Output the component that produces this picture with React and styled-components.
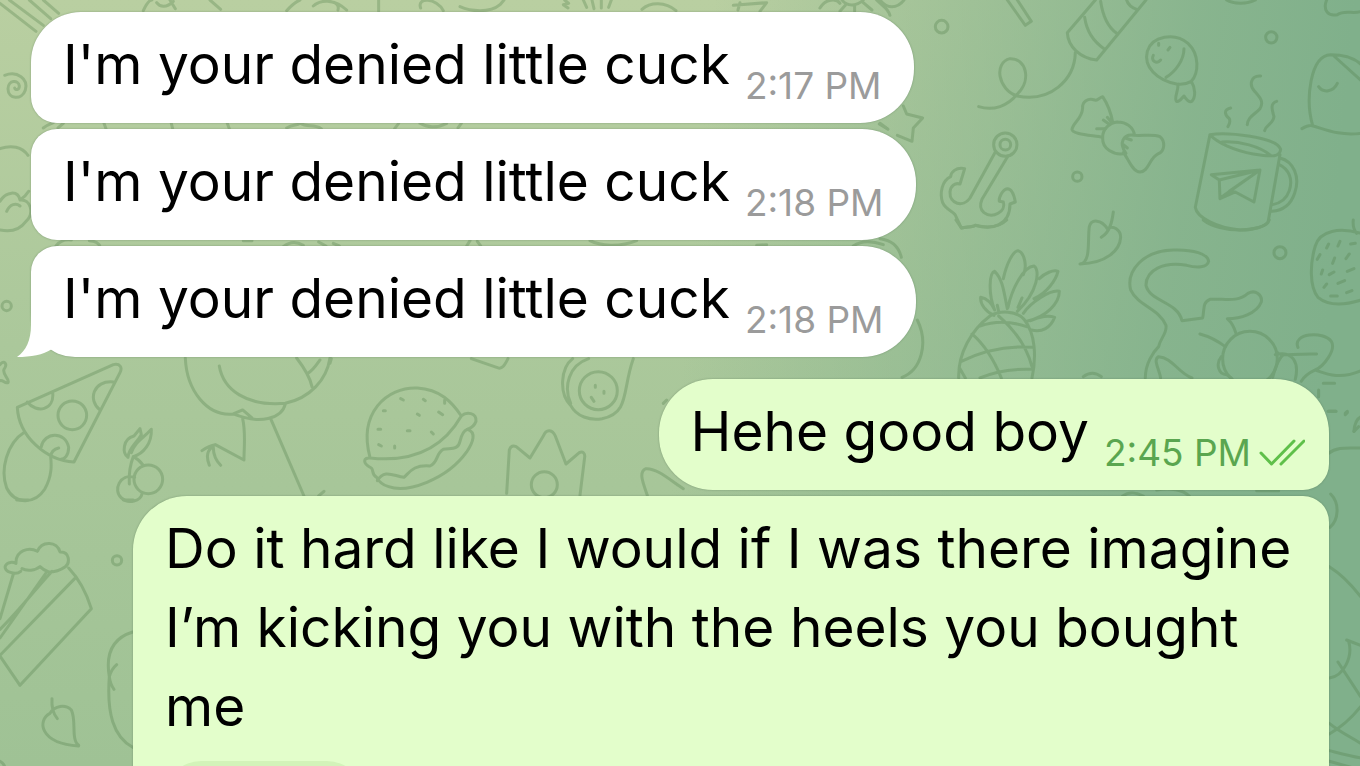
import React from "react";
import styled, { createGlobalStyle } from "styled-components";

const incoming = [
  { id: 1, text: "I'm your denied little cuck", time: "2:17 PM" },
  { id: 2, text: "I'm your denied little cuck", time: "2:18 PM" },
  { id: 3, text: "I'm your denied little cuck", time: "2:18 PM" },
];

function App() {
  return (
    <>
      <GlobalStyle />
      <Chat>
        <Wallpaper />
        <Group>
          {incoming.map((message, i) => (
            <Incoming
              key={message.id}
              $first={i === 0}
              $last={i === incoming.length - 1}
            >
              <Text>{message.text}</Text>
              <Time>{message.time}</Time>
              {i === incoming.length - 1 && <Tail />}
            </Incoming>
          ))}
        </Group>
        <Group>
          <Outgoing $first>
            <Text>Hehe good boy</Text>
            <Time $out>
              2:45 PM
              <Checks />
            </Time>
          </Outgoing>
          <Outgoing $long>
            <Text>
              Do it hard like I would if I was there imagine I’m kicking you
              with the heels you bought me
            </Text>
            <Reaction type="button" aria-label="Reactions" />
          </Outgoing>
        </Group>
      </Chat>
    </>
  );
}
export default App;

function Checks() {
  return (
    <ChecksIcon viewBox="0 0 46 28" aria-label="Read">
      <path d="M2 14 L12.500 25 L35 2" />
      <path d="M22 25 L45 2" />
    </ChecksIcon>
  );
}

function Tail() {
  return (
    <TailShape viewBox="0 0 36 44" aria-hidden="true">
      <path d="M14 0 V12 C14 27 9 38 0 44 C14 44 26 42 35 36 V0 Z" />
    </TailShape>
  );
}

function Wallpaper() {
  return (
    <Pattern
      viewBox="0 0 1360 766"
      preserveAspectRatio="xMidYMid slice"
      aria-hidden="true"
    >
      {/* top left: rays, shells, clouds */}
      <g transform="scale(.3333)">
        <path d="M0 10 L108 94 M28 0 L130 76 M88 0 L152 56 M130 0 L176 40" />
        <path d="M14 226 C52 212 86 236 76 270 C66 302 24 298 24 266 C24 240 56 238 58 258 C58 270 46 272 44 264" />
        <path d="M0 446 C34 434 66 440 84 466 M0 604 C18 574 54 570 60 600 C92 596 104 640 78 664 C56 694 28 696 0 690 M20 634 C30 612 48 608 60 618 M60 600 C70 594 80 584 86 574" />
        <path d="M430 32 C440 10 448 0 456 0 M470 8 C480 22 500 24 520 4 M510 0 L526 26 M630 0 L662 28 M860 32 C880 10 890 4 900 0 M940 18 C960 0 1000 -6 1040 30 M990 4 C1010 8 1018 16 1014 30 M1136 0 V34 M1262 24 C1250 -10 1310 -6 1330 32" />
        <path d="M130 384 C140 376 150 372 160 368 M174 384 L190 370 M312 370 L318 386 M514 370 L518 386 M682 370 L688 386 M860 384 C880 372 890 378 900 370 C924 384 940 370 964 386 M1184 386 L1196 370 M1260 370 C1280 382 1310 386 1340 370" />
        <path d="M168 738 C180 722 200 718 214 720 M268 722 C290 724 298 732 300 740 M730 722 L756 722 M850 740 C870 724 890 724 910 736 M956 726 L978 738 M1000 730 L1018 738" />
      </g>
      {/* top middle */}
      <g transform="translate(440 0) scale(.3333)">
        <path d="M60 20 C90 34 150 40 180 14 L192 0 M374 0 L386 10 L370 14 L384 24 M430 0 L440 22 M456 0 L462 26 M484 0 L484 24 M514 0 L506 22 M606 28 C630 6 676 4 708 32 M880 16 L980 8 L960 34 M900 8 L894 30 M1140 24 C1156 -4 1190 -6 1200 10 M1206 0 C1220 20 1250 20 1270 0 M1216 16 L1200 34 M1244 14 V34 M1270 8 L1296 30 M1310 0 C1330 20 1344 24 1350 46" />
        <path d="M54 384 L64 370 M1318 372 L1344 388 M80 738 L90 722 M112 724 L122 738 M450 722 C480 738 540 742 590 722 M950 736 L980 734 M1240 738 C1260 724 1290 720 1330 734" />
      </g>
      {/* firework, anchor, candy, fish, mug, ghost */}
      <g transform="translate(880 0) scale(.3333)">
        <path d="M0 0 C20 26 50 28 72 0 M382 0 L436 76 L454 64 L412 0" />
        <circle cx="185" cy="80" r="19" />
        <circle cx="1174" cy="112" r="17" />
        <circle cx="592" cy="530" r="14" />
        <path d="M646 0 L562 98 C564 140 600 174 650 180 L798 0 M614 52 C620 94 642 126 672 146 M662 4 C668 46 682 80 710 100 M740 0 C744 14 754 22 770 28" />
        <path d="M586 158 C584 240 510 308 412 288 C354 270 340 188 390 176 C438 174 456 240 412 282 C384 318 340 334 296 320" />
        <path d="M890 252 C830 240 790 200 802 154 C816 108 884 96 924 130 C960 164 956 220 934 244 C920 252 904 254 890 252 Z M912 146 C912 180 886 216 858 232 M894 252 C896 276 880 294 890 304 C898 308 906 292 912 288 C918 296 926 310 936 304 C948 290 946 264 934 244 M820 166 C812 182 830 194 842 180 M836 130 V136 M870 142 L864 150" />
        <path d="M698 366 C692 334 680 308 668 290 C656 294 650 304 644 300 C624 292 606 306 608 324 C606 358 580 366 576 388 C576 404 640 406 668 412 M650 386 L676 386 M670 360 L690 374 M682 352 L694 366" />
        <path d="M712 366 C740 366 760 382 764 406 M764 406 C728 400 716 430 738 460 C700 468 666 446 668 412 C668 386 690 368 712 366 M764 406 C790 408 820 402 840 410 C856 424 856 452 834 462 C808 474 806 516 780 516 C756 516 744 472 730 458 M736 414 L754 420 M730 434 L742 444" />
        <circle cx="376" cy="434" r="35" />
        <circle cx="376" cy="434" r="16" />
        <path d="M346 456 L270 594 C250 624 208 612 210 576 C212 556 226 548 240 552 L254 506 C228 500 212 518 212 530 C186 542 178 580 188 608 C200 634 226 634 228 650 L244 684 C262 680 278 682 286 676 C336 692 390 676 390 612 L406 606 C402 582 394 566 382 566 C368 568 356 592 358 604 L370 606 C380 634 338 658 312 638 C298 626 300 612 306 598 L384 468" />
        <path d="M70 318 L80 342 L128 354 L100 384 L96 424 L52 406 M0 370 L22 386" />
        <path d="M990 404 L946 622 C950 652 1010 684 1080 690 C1120 690 1154 680 1164 668 L1200 464 M990 404 C1040 396 1190 410 1202 448 C1200 470 1180 472 1120 462 C1064 452 1012 428 990 404 Z M1026 426 C1080 422 1140 440 1172 466 M1200 474 C1240 484 1262 530 1244 580 C1232 616 1206 632 1176 634 M1198 494 C1226 508 1240 536 1228 572 C1220 596 1200 610 1178 614" />
        <path d="M994 524 L1140 510 L1122 606 L1066 576 L1020 596 L1018 540 Z M1018 540 L1140 510 L1024 592 M1140 510 L1048 574 L1066 576" />
        <path d="M1142 228 C1110 226 1108 258 1124 274 C1142 294 1152 306 1140 326 C1124 344 1104 350 1102 374 M1190 304 C1168 310 1178 334 1182 350 C1180 372 1158 374 1154 392 M1052 324 C1028 330 1036 346 1048 356 C1052 366 1048 374 1044 380" />
        <path d="M1040 0 C1060 12 1100 14 1126 0 M1340 0 C1328 30 1344 50 1372 44 C1396 28 1420 44 1444 34 M1298 376 C1276 300 1290 166 1352 164 C1400 164 1430 180 1444 194 M1362 168 L1444 242 M1316 260 C1330 280 1360 276 1372 250 M1266 386 C1280 378 1290 374 1300 378 C1340 390 1380 408 1444 400" />
      </g>
      {/* pineapple, leaf, cat, strawberry */}
      <g transform="translate(880 220) scale(.3333)">
        <path d="M228 0 L244 24 C262 20 278 22 286 16 C330 26 360 20 380 0 M0 56 C34 60 56 78 64 112 M112 300 C146 370 124 450 66 472" />
        <path d="M600 132 C634 128 622 60 628 20 C634 -4 664 -2 682 26 C700 14 722 30 722 52 C720 90 680 130 600 132 Z M700 -24 C696 6 690 36 664 52" />
        <path d="M382 266 C372 220 370 180 344 154 C328 158 324 220 344 270 M370 176 C380 130 400 92 414 92 C434 98 442 140 430 164 M384 262 C396 206 430 140 462 138 C480 148 476 214 412 274 M478 176 C494 160 520 148 534 154 C528 180 500 220 462 236 M430 280 C450 250 510 208 538 214 C538 250 500 290 440 304 M452 302 C480 288 508 286 524 292 C512 324 486 338 454 330 M342 286 C318 276 300 252 302 232 C322 236 336 252 344 270 M414 262 L426 234 M356 274 L352 256" />
        <path d="M236 474 C234 400 274 330 330 288 C360 270 410 272 432 298 C466 340 470 410 456 474 M300 318 C350 300 400 306 440 320 M276 342 C320 380 346 430 364 474 M356 288 C400 326 440 380 456 440 M244 424 C310 392 380 376 460 382 M300 474 C350 452 410 446 460 448 M240 446 L256 474" />
        <path d="M796 474 C796 430 820 396 836 380 C842 352 862 340 858 316 C838 266 774 258 752 210 C738 152 790 92 880 90 C940 88 984 102 986 124 C982 144 950 144 920 136 C850 124 798 150 798 196 C810 246 892 244 906 302 L968 294 C974 270 966 248 990 238 C1030 234 1070 250 1104 220 C1126 208 1148 224 1144 246 C1130 282 1080 296 1042 296 C1060 312 1064 326 1068 340 M960 342 C990 350 1020 368 1036 380 M842 474 C838 446 818 420 836 410 C876 412 896 460 936 474" />
        <circle cx="1110" cy="416" r="82" />
        <path d="M1024 410 C1006 432 1016 464 1040 464 L1054 474 M1190 396 C1202 412 1230 400 1310 402 M1186 404 C1240 390 1258 430 1246 478 M1178 472 C1186 440 1196 414 1212 402 M1254 382 C1236 340 1330 332 1354 364 C1370 390 1330 440 1306 450 C1280 462 1270 474 1264 484 M1306 450 C1340 462 1380 480 1444 452 M1330 490 H1364 M1316 510 V530 M1346 574 H1368 M1396 580 L1402 574 M1422 634 C1424 610 1430 596 1444 590" />
        <circle cx="1200" cy="98" r="18" />
        <path d="M1444 40 C1380 22 1320 30 1306 78 C1290 130 1288 200 1314 232 C1350 262 1400 254 1444 240 M1420 0 C1418 18 1422 30 1430 40 M970 0 C1020 40 1150 40 1168 0" />
        <path d="M1346 72 L1340 84 M1380 64 L1374 78 M1412 72 L1426 70 M1320 104 L1312 118 M1364 114 L1358 130 M1408 102 L1398 116 M1328 150 L1324 162 M1348 164 L1362 156 M1402 154 L1422 146 M1340 192 L1332 202 M1374 190 L1394 182 M1352 228 H1372 M1400 218 L1416 212 M610 470 C626 458 646 456 664 470" />
      </g>
      {/* pizza, cherries, flamingo */}
      <g transform="translate(0 230) scale(.3333)">
        <circle cx="20" cy="228" r="14" />
        <path d="M0 404 C12 388 24 402 12 418 C6 434 30 446 24 458 C14 462 8 448 0 452" />
        <path d="M52 532 L340 404 C360 400 368 412 360 428 L222 696 C140 692 56 620 52 532 Z M82 516 C110 552 164 540 158 488 M340 456 C280 450 262 510 300 540 M124 650 C132 606 196 602 206 652 C206 676 194 688 182 688 M74 606 C20 640 0 720 20 774 C46 826 106 822 134 778 C158 736 154 700 152 680 C154 664 166 656 176 654" />
        <circle cx="217" cy="556" r="43" />
        <circle cx="445" cy="748" r="43" />
        <path d="M404 742 C360 730 338 780 364 804 C386 824 422 812 426 792 M388 762 C386 730 392 700 400 680 C412 686 424 698 430 706 M400 680 C430 672 456 640 454 598 L440 612 M384 682 C366 670 368 626 402 618 L420 596 L424 614 C410 640 386 652 384 682 M440 612 C420 630 404 640 394 668" />
        <path d="M556 384 C560 480 620 560 700 552 C780 584 846 566 856 522 M658 408 C670 480 740 530 856 520 C930 504 980 450 990 384 M890 384 C910 410 930 440 936 470 M924 430 C940 420 950 404 960 390 M700 552 L728 540 L756 564 M728 566 C738 610 732 650 732 690 L646 644 M606 662 C620 652 630 646 646 644 M638 650 C620 662 618 680 628 706 M640 652 C640 680 650 694 662 706 M812 566 L912 798 M956 798 L972 784" />
      </g>
      {/* burger, avocado, crown */}
      <g transform="translate(330 340) scale(.3333)">
        <path d="M120 352 C84 220 170 140 262 144 C330 148 366 186 394 228 C410 214 440 218 438 244 C430 264 420 264 412 268 C440 276 430 306 410 336 C350 420 230 460 176 440 C156 434 144 420 140 412 C124 404 132 392 124 384 C96 370 100 352 120 354 C230 366 330 340 394 228" />
        <path d="M142 422 C164 386 190 408 222 412 C240 396 250 374 300 378 C326 366 316 342 340 328 C366 324 384 330 390 304 C394 286 400 272 412 268" />
        <path d="M212 176 L220 180 M280 178 L286 182 M344 180 V190 M160 212 H166 M262 222 L268 226 M326 216 L338 224 M144 268 H152 M232 272 H240 M304 276 L310 282 M146 314 L154 318 M194 318 V324" />
        <path d="M530 460 L538 330 C544 312 558 318 566 326 L600 354 L640 288 C650 264 668 270 676 288 L708 372 L748 338 C758 332 766 340 764 352 L750 466" />
        <circle cx="643" cy="434" r="39" />
        <circle cx="805" cy="152" r="57" />
        <path d="M728 56 C692 84 686 160 722 196 C740 230 780 242 816 236 C900 220 876 150 910 56 M776 56 C716 76 700 140 722 190 M796 136 V142 M822 154 V160 M784 172 L792 184 M424 56 L500 82 C516 92 526 72 534 56 M0 70 L4 56 M952 466 C940 430 924 396 948 386 C980 384 1020 420 1060 446 M1000 190 L1010 180" />
      </g>
      {/* popcorn, leaf */}
      <g transform="translate(0 500) scale(.3333)">
        <path d="M62 214 C48 226 10 216 16 198 C22 184 40 186 48 190 C46 150 88 140 112 154 C126 120 172 124 180 156 C210 154 210 190 196 200 C176 214 160 216 146 216 C134 212 126 206 120 200 C106 212 80 214 66 206 M40 222 L0 356 M140 216 L0 414 M156 214 C120 250 60 330 0 388 M224 236 L0 466 M206 204 C240 240 260 280 274 326 L60 556 L0 468" />
        <circle cx="351" cy="181" r="14" />
        <path d="M236 736 C212 720 230 660 214 630 C196 612 164 616 150 640 C112 660 116 730 236 738 Z M156 596 C154 626 160 642 172 656" />
        <path d="M398 396 C340 414 316 460 328 530 C320 640 340 710 398 742 M350 494 C336 506 332 516 328 530 C330 548 336 560 342 568 M0 784 C8 788 12 794 14 800 M50 0 H84 M370 0 H400" />
      </g>
      {/* strip right of the outgoing bubbles */}
      <g transform="translate(1090 400) scale(.3333)">
        <path d="M714 34 H738 M766 44 L772 38 M792 94 L806 80 M716 160 C740 140 770 144 810 144 M722 282 C750 310 746 360 720 382 M718 500 C750 520 786 556 812 590 M770 720 L812 736 M776 724 C790 770 760 830 718 834 M744 786 L812 890 M812 920 C780 960 750 984 718 1002 M718 970 C750 996 780 1010 812 1030 M718 1052 C750 1060 780 1068 812 1074 M718 1084 L812 1110 M98 288 C120 272 140 278 160 288 M200 270 C240 262 280 270 298 288 M500 272 H566" />
      </g>
    </Pattern>
  );
}

const GlobalStyle = createGlobalStyle`
  * {
    box-sizing: border-box;
  }

  body {
    margin: 0;
    font-family: Inter, "Liberation Sans", sans-serif;
  }
`;

const Chat = styled.main`
  position: relative;
  height: 100vh;
  overflow: hidden;
  display: flex;
  flex-direction: column;
  gap: 22px;
  padding: 12px 31px 0;
  background:
    linear-gradient(
      95deg,
      rgba(128, 176, 139, 0) 50%,
      rgba(128, 176, 139, 0.5) 70%,
      rgba(128, 176, 139, 0.85) 84%,
      rgb(128, 176, 139) 95%
    ),
    linear-gradient(#b9cfa1, #abc89b 45%, #9fc295);
`;

const Pattern = styled.svg`
  position: absolute;
  inset: 0;
  width: 100%;
  height: 100%;
  fill: none;
  stroke: #4f7d48;
  stroke-width: 9;
  stroke-linecap: round;
  stroke-linejoin: round;
  opacity: 0.3;
`;

const Group = styled.section`
  position: relative;
  display: flex;
  flex-direction: column;
  flex-shrink: 0;
  gap: 6px;
`;

const Bubble = styled.article`
  position: relative;
  display: flex;
  gap: 15px;
  padding: 13px 32px 19px;
  color: #000;
  box-shadow: 0 0 2px rgba(60, 90, 60, 0.45);
`;

const Incoming = styled(Bubble)`
  align-self: flex-start;
  background: #fff;
  border-radius: ${({ $first, $last }) =>
    `${$first ? 50 : 26}px 54px 54px ${$last ? 44 : 26}px`};
`;

const Outgoing = styled(Bubble)`
  align-self: flex-end;
  max-width: calc(100% - 102px);
  flex-direction: ${({ $long }) => ($long ? "column" : "row")};
  background: #e3fecb;
  border-radius: ${({ $first }) =>
    $first ? "54px 54px 26px 54px" : "54px 26px 26px 54px"};
`;

const Text = styled.p`
  margin: 0;
  font-size: 55px;
  line-height: 79px;
`;

const Time = styled.time`
  display: flex;
  align-items: center;
  align-self: flex-end;
  gap: 8px;
  font-size: 37px;
  line-height: 36px;
  white-space: nowrap;
  color: ${({ $out }) => ($out ? "#5aa650" : "#9b9b9b")};
`;

const ChecksIcon = styled.svg`
  width: 46px;
  height: 28px;
  margin-right: -8px;
  fill: none;
  stroke: #5fc04a;
  stroke-width: 3;
  stroke-linecap: round;
  stroke-linejoin: round;
`;

const TailShape = styled.svg`
  position: absolute;
  left: -14px;
  bottom: 0;
  width: 36px;
  height: 44px;
  fill: #fff;
`;

const Reaction = styled.button`
  width: 198px;
  height: 72px;
  border: none;
  border-radius: 36px;
  background: #d3f3b9;
  cursor: pointer;
`;
